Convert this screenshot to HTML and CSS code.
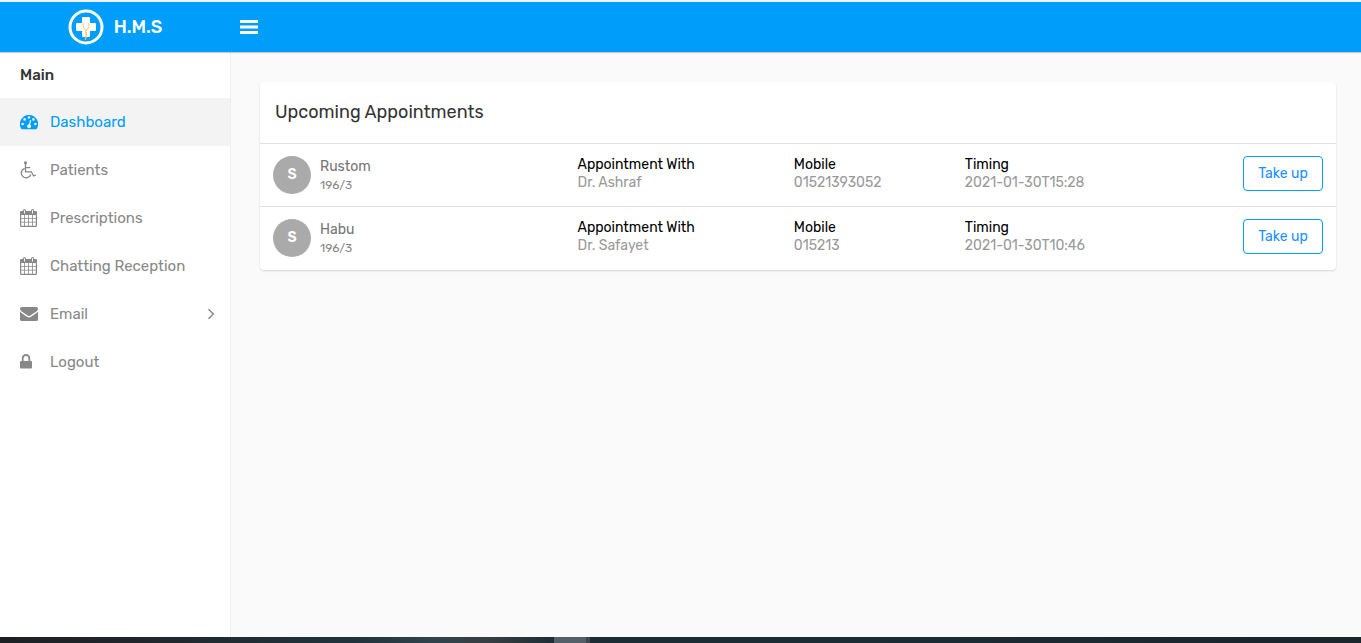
FILE: index.html
```html
<!DOCTYPE html>
<html lang="en">
<head>
<meta charset="utf-8">
<title>H.M.S</title>
<link rel="stylesheet" href="styles.css">
</head>
<body>
<svg class="sprite" aria-hidden="true">
  <symbol id="calendar" viewBox="0 0 18 18">
    <path fill-rule="evenodd" d="M1.300 2H3V1.700Q3 0 4.500 0T6 1.700V2H11V1.700Q11 0 12.500 0T14 1.700V2H15.700Q17 2 17 3.300V16.700Q17 18 15.700 18H1.300Q0 18 0 16.700V3.300Q0 2 1.300 2ZM1.200 6V9H4.200V6ZM5 6V9H8.100V6ZM8.900 6V9H12V6ZM12.800 6V9H15.800V6ZM1.200 9.800V12.700H4.200V9.800ZM5 9.800V12.700H8.100V9.800ZM8.900 9.800V12.700H12V9.800ZM12.800 9.800V12.700H15.800V9.800ZM1.200 13.500V16.700H4.200V13.500ZM5 13.500V16.700H8.100V13.500ZM8.900 13.500V16.700H12V13.500ZM12.800 13.500V16.700H15.800V13.500ZM4 1.300V4.400H5V1.300ZM12 1.300V4.400H13V1.300Z"/>
  </symbol>
</svg>
<header class="topbar">
  <a class="brand" href="#">
    <svg class="logo" viewBox="0 0 36 36" aria-hidden="true">
      <circle cx="18" cy="18" r="16" fill="none" stroke="#fff" stroke-width="3"/>
      <path fill="#fff" d="M15 8h6q1 0 1 1v5h5q1 0 1 1v6q0 1-1 1h-5v5q0 1-1 1h-6q-1 0-1-1v-5h-5q-1 0-1-1v-6q0-1 1-1h5v-5q0-1 1-1z"/>
      <path fill="none" stroke="#f7c878" stroke-width="1" d="M16 14.500q-1.500 0-1 2.500t3 4q2.500-1.500 3-4t-1-2.500M18 21v5q0 3-1 5M18 22.500q1.500 4 0 7"/>
    </svg>
    <span>H.M.S</span>
  </a>
  <button class="toggle" type="button" aria-label="Toggle menu">
    <svg viewBox="0 0 18 14" aria-hidden="true"><path fill="#fff" d="M0 0h18v3H0zM0 5.500h18v3H0zM0 11h18v3H0z"/></svg>
  </button>
</header>
<div class="layout">
  <nav class="sidebar">
    <h2 class="menu-title">Main</h2>
    <a class="item active" href="#">
      <svg class="icon" viewBox="0 0 18 18" aria-hidden="true"><path fill-rule="evenodd" d="M9 2A9 9 0 0 1 16.600 16Q16.400 16.300 16 16.300H2Q1.600 16.300 1.400 16A9 9 0 0 1 9 2ZM9 3.200a1.300 1.300 0 1 0 0 2.600a1.300 1.300 0 1 0 0-2.600ZM4.600 5.100a1.300 1.300 0 1 0 0 2.600a1.300 1.300 0 1 0 0-2.600ZM13.400 5.100a1.300 1.300 0 1 0 0 2.600a1.300 1.300 0 1 0 0-2.600ZM2.600 9.700a1.300 1.300 0 1 0 0 2.600a1.300 1.300 0 1 0 0-2.600ZM15.400 9.700a1.300 1.300 0 1 0 0 2.600a1.300 1.300 0 1 0 0-2.600ZM10 7L9 11.200A2 2 0 1 0 10.200 11.500L11.300 7.300Z"/></svg>
      <span>Dashboard</span>
    </a>
    <a class="item" href="#">
      <svg class="icon" viewBox="0 0 18 18" aria-hidden="true"><circle cx="5.500" cy="1.800" r="1.600"/><path fill="none" stroke="currentColor" stroke-width="1.300" d="M5.500 2.500V10.800H11.400L13.600 15L15.800 13.900M5.500 6.700H10.300M4.600 7.300A4.900 4.900 0 1 0 10.800 13.500"/></svg>
      <span>Patients</span>
    </a>
    <a class="item" href="#">
      <svg class="icon" aria-hidden="true"><use href="#calendar"/></svg>
      <span>Prescriptions</span>
    </a>
    <a class="item" href="#">
      <svg class="icon" aria-hidden="true"><use href="#calendar"/></svg>
      <span>Chatting Reception</span>
    </a>
    <a class="item" href="#">
      <svg class="icon" viewBox="0 0 18 18" aria-hidden="true"><path d="M1.600 2H16.400Q18 2 18 3.700Q18 5.200 16.300 6.500L11.200 10Q9.800 11.100 9 11.100T6.800 10L1.700 6.500Q0 5.200 0 3.700Q0 2 1.600 2ZM0 6.600Q.5 7.200 1.200 7.700L6.200 11.200Q8 12.500 9 12.500T11.800 11.200L16.800 7.700Q17.500 7.200 18 6.600V14.400Q18 16 16.400 16H1.600Q0 16 0 14.400Z"/></svg>
      <span>Email</span>
      <svg class="chevron" viewBox="0 0 8 12" aria-hidden="true"><path fill="none" stroke="currentColor" stroke-width="1.500" d="M1.500 1.200L6.300 6L1.500 10.800"/></svg>
    </a>
    <a class="item" href="#">
      <svg class="icon" viewBox="0 0 18 18" aria-hidden="true"><path fill-rule="evenodd" d="M1.800 8V5.300A4.200 4.200 0 0 1 10.200 5.300V8H11Q12 8 12 9V14.500Q12 15.500 11 15.500H1Q0 15.500 0 14.500V9Q0 8 1 8ZM3.600 8H8.400V5.300A2.400 2.400 0 0 0 3.600 5.300Z"/></svg>
      <span>Logout</span>
    </a>
  </nav>
  <main class="content">
    <section class="card">
      <h1 class="card-title">Upcoming Appointments</h1>
      <table class="appointments">
        <colgroup><col class="col-patient"><col class="col-doctor"><col class="col-mobile"><col class="col-time"><col class="col-action"></colgroup>
        <tbody>
          <tr>
            <td><div class="patient"><span class="avatar">S</span><div class="who"><a class="name" href="#">Rustom</a><div class="sub">196/3</div></div></div></td>
            <td><h3>Appointment With</h3><p>Dr. Ashraf</p></td>
            <td><h3>Mobile</h3><p>01521393052</p></td>
            <td><h3>Timing</h3><p>2021-01-30T15:28</p></td>
            <td class="action"><button class="take" type="button">Take up</button></td>
          </tr>
          <tr>
            <td><div class="patient"><span class="avatar">S</span><div class="who"><a class="name" href="#">Habu</a><div class="sub">196/3</div></div></div></td>
            <td><h3>Appointment With</h3><p>Dr. Safayet</p></td>
            <td><h3>Mobile</h3><p>015213</p></td>
            <td><h3>Timing</h3><p>2021-01-30T10:46</p></td>
            <td class="action"><button class="take" type="button">Take up</button></td>
          </tr>
        </tbody>
      </table>
    </section>
  </main>
</div>
<footer class="taskbar"><span class="task"></span></footer>
</body>
</html>
```
FILE: styles.css
```css
* { box-sizing: border-box; }
body {
  margin: 0;
  min-height: 100vh;
  display: flex;
  flex-direction: column;
  background: #fafafa;
  color: #333;
  font-family: Rubik, Inter, "Liberation Sans", sans-serif;
  font-size: 14px;
}
h1, h2, h3, p { margin: 0; font-weight: 400; }
a { color: inherit; text-decoration: none; }
button { font: inherit; cursor: pointer; }
.sprite { display: none; }
.topbar {
  display: flex;
  align-items: center;
  height: 52px;
  border-top: 2px solid #f1f1f1;
  background: #009efb;
  box-shadow: 0 1px 1px rgba(0, 0, 0, .2);
  z-index: 1;
}
.brand {
  width: 230px;
  display: flex;
  align-items: center;
  justify-content: center;
  gap: 10px;
  color: #fff;
  font-size: 18px;
  font-weight: 500;
}
.logo { width: 36px; height: 36px; }
.toggle { display: flex; padding: 10px; border: 0; background: none; }
.toggle svg { width: 18px; height: 14px; }
.layout { flex: 1; display: flex; }
.sidebar {
  width: 231px;
  flex: none;
  background: #fff;
  border-right: 1px solid #efefef;
  color: #888;
  font-size: 15px;
}
.menu-title {
  padding: 0 20px;
  color: #333;
  font-size: 15px;
  font-weight: 500;
  line-height: 46px;
}
.item {
  display: flex;
  align-items: center;
  gap: 12px;
  height: 48px;
  padding: 0 15px 0 20px;
}
.active { background: #f3f3f3; color: #009efb; }
.icon { width: 18px; height: 18px; fill: currentColor; }
.chevron { width: 8px; height: 12px; margin-left: auto; }
.content { flex: 1; padding: 30px 25px 30px 29px; }
.card {
  background: #fff;
  border-radius: 4px;
  box-shadow: 0 1px 2px rgba(0, 0, 0, .15);
}
.card-title {
  padding: 0 15px;
  font-size: 18px;
  line-height: 61px;
}
.appointments { width: 100%; border-collapse: collapse; table-layout: fixed; }
.col-patient { width: 28.3%; }
.col-doctor { width: 20.1%; }
.col-mobile { width: 15.9%; }
.col-time { width: 21%; }
.appointments td {
  height: 63px;
  padding: 12px 13px;
  border-top: 1px solid #dee2e6;
  vertical-align: top;
}
.appointments h3 { color: #000; font-size: 14px; line-height: 18px; }
.appointments p { color: #999; font-size: 14px; line-height: 18px; }
.patient { display: flex; gap: 9px; }
.avatar {
  width: 38px;
  height: 38px;
  border-radius: 50%;
  background: #aaa;
  color: #fff;
  font-weight: 600;
  line-height: 38px;
  text-align: center;
}
.who { padding-top: 2px; }
.name { display: block; color: #757575; line-height: 18px; }
.sub { color: #888; font-size: 12px; line-height: 18px; }
.appointments .action { text-align: right; }
.take {
  width: 80px;
  height: 35px;
  padding: 0;
  border: 1px solid #009efb;
  border-radius: 4px;
  background: #fff;
  color: #1b90ff;
}
.taskbar {
  height: 6px;
  display: flex;
  background: linear-gradient(90deg, #1c2023, #20272d 12%, #20333d 26%, #31434c 32%, #363e42 36%, #1c2c35 41%, #1b2c35 60%, #1a252c);
}
.task { width: 36px; margin-left: 554px; background: #536069; border-right: 4px solid #3d474e; }
```
